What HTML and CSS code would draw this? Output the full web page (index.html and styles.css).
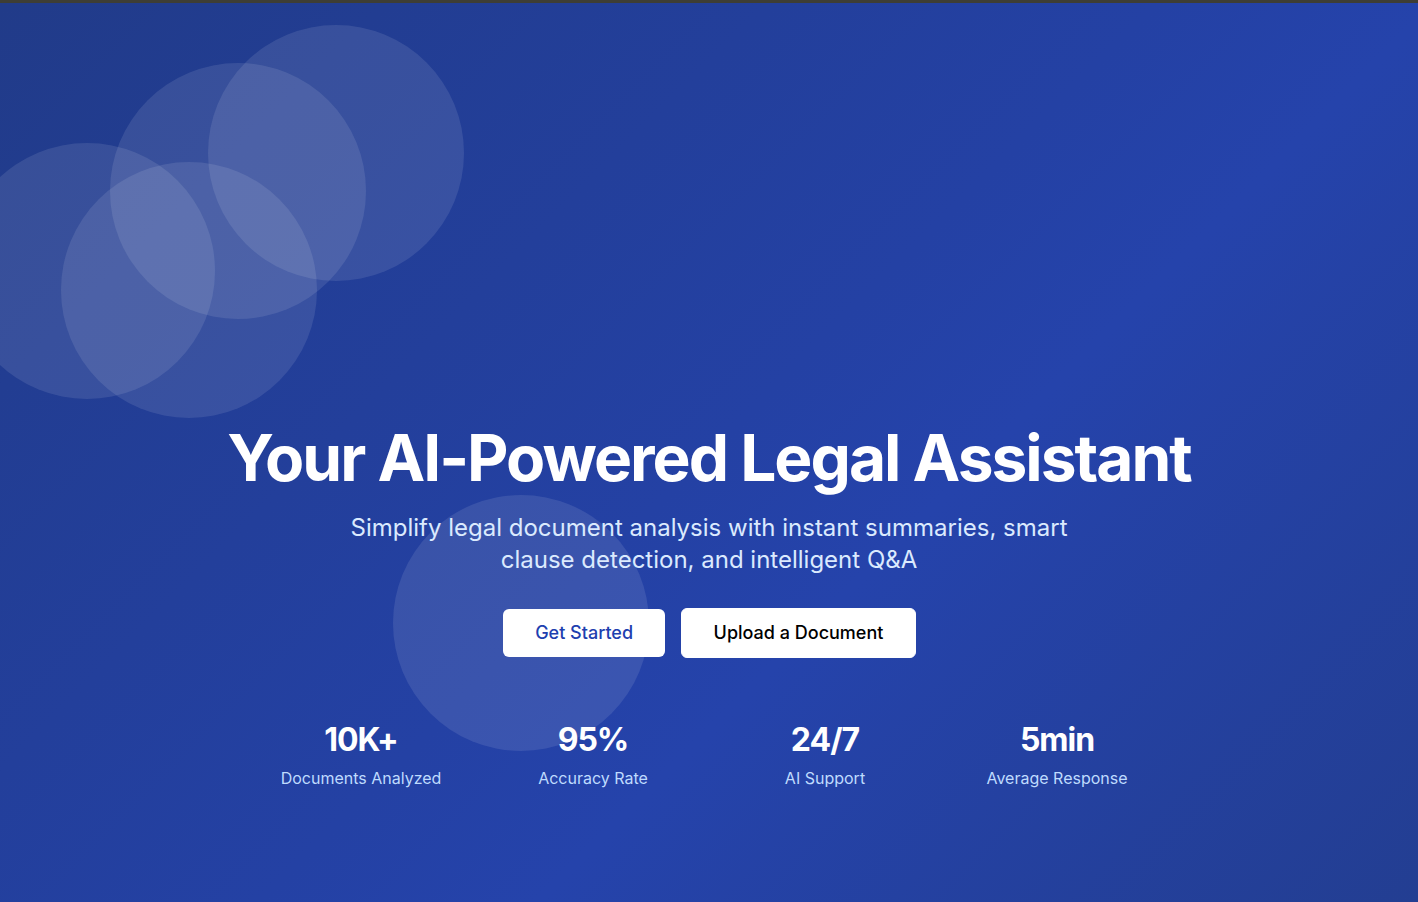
FILE: index.html
```html
<!DOCTYPE html>
<html lang="en">
<head>
<meta charset="utf-8">
<title>AI Legal Assistant</title>
<link rel="stylesheet" href="styles.css">
</head>
<body>
<section class="hero">
  <div class="bubbles" aria-hidden="true">
    <span class="bubble b1"></span>
    <span class="bubble b2"></span>
    <span class="bubble b3"></span>
    <span class="bubble b4"></span>
    <span class="bubble b5"></span>
  </div>
  <div class="hero-content">
    <h1 class="hero-title">Your AI-Powered Legal Assistant</h1>
    <p class="hero-sub">Simplify legal document analysis with instant summaries, smart clause detection, and intelligent Q&amp;A</p>
    <div class="hero-actions">
      <a class="btn btn-primary" href="#">Get Started</a>
      <a class="btn btn-outline" href="#">Upload a Document</a>
    </div>
    <div class="stats">
      <div class="stat"><div class="stat-num">10K+</div><div class="stat-label">Documents Analyzed</div></div>
      <div class="stat"><div class="stat-num">95%</div><div class="stat-label">Accuracy Rate</div></div>
      <div class="stat"><div class="stat-num">24/7</div><div class="stat-label">AI Support</div></div>
      <div class="stat"><div class="stat-num">5min</div><div class="stat-label">Average Response</div></div>
    </div>
  </div>
</section>
</body>
</html>
```

FILE: styles.css
```css
* { box-sizing: border-box; }
html, body { margin: 0; padding: 0; }
body {
  font-family: Inter, "Noto Sans", sans-serif;
  background: #3e3e35;
  overflow: hidden;
}
.hero {
  position: relative;
  margin-top: 3px;
  height: 899px;
  background: linear-gradient(135deg, #213b89 0%, #2441a4 50%, #2543ab 62%, #233e92 100%);
  overflow: hidden;
  color: #fff;
}
.bubbles { position: absolute; inset: 0; pointer-events: none; }
.bubble {
  position: absolute;
  width: 256px;
  height: 256px;
  border-radius: 50%;
  background: rgba(255, 255, 255, 0.1);
}
.b1 { left: -41px; top: 140px; }
.b2 { left: 110px; top: 60px; }
.b3 { left: 208px; top: 22px; }
.b4 { left: 61px; top: 159px; }
.b5 { left: 393px; top: 492px; }

.hero-content {
  position: relative;
  display: flex;
  flex-direction: column;
  align-items: center;
  text-align: center;
  padding-top: 420px;
}
.hero-title {
  margin: 0;
  font-size: 64px;
  line-height: 70px;
  font-weight: 700;
  letter-spacing: -2px;
}
.hero-sub {
  margin: 19px 0 0;
  max-width: 768px;
  font-size: 24px;
  line-height: 32px;
  color: #dbeafe;
}
.hero-actions {
  display: flex;
  gap: 16px;
  align-items: center;
  margin-top: 32px;
  padding-left: 1px;
}
.btn {
  display: inline-block;
  padding: 12px 32px;
  font-size: 18px;
  line-height: 24px;
  font-weight: 500;
  text-decoration: none;
  border-radius: 6px;
  background: #fff;
}
.btn-primary { color: #1e40af; }
.btn-outline { color: #000; border: 1px solid #fff; padding: 12px 31.5px; }

.stats {
  display: grid;
  grid-template-columns: repeat(4, 200px);
  gap: 32px;
  margin-top: 62px;
}
.stat-num {
  font-size: 32px;
  line-height: 40px;
  font-weight: 700;
  letter-spacing: -1px;
}
.stat-label {
  margin-top: 6px;
  font-size: 16px;
  line-height: 24px;
  color: #bfdbfe;
}
```
